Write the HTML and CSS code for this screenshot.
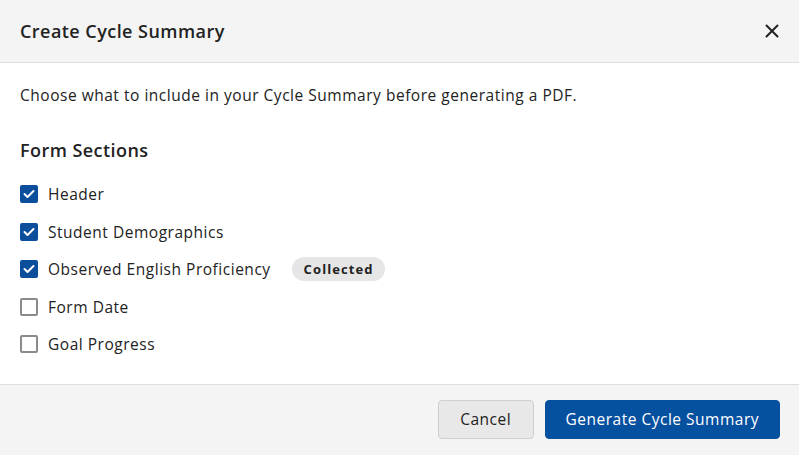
FILE: index.html
```html
<!DOCTYPE html>
<html lang="en">
<head>
<meta charset="utf-8">
<title>Create Cycle Summary</title>
<link rel="stylesheet" href="styles.css">
</head>
<body>
<div class="modal">
  <header class="modal-header">
    <h1 class="modal-title">Create Cycle Summary</h1>
    <button class="close-btn" aria-label="Close">
      <svg width="14" height="14" viewBox="0 0 14 14"><path d="M1.5 1.5 L12.5 12.5 M12.5 1.5 L1.5 12.5" stroke="#222" stroke-width="2" stroke-linecap="round" fill="none"/></svg>
    </button>
  </header>
  <main class="modal-body">
    <p class="intro">Choose what to include in your Cycle Summary before generating a PDF.</p>
    <h2 class="section-title">Form Sections</h2>
    <ul class="options">
      <li class="option"><span class="box checked"><svg width="12" height="10" viewBox="0 0 12 10"><path d="M1.5 5 L4.5 8 L10.5 2" stroke="#fff" stroke-width="2" fill="none" stroke-linecap="round" stroke-linejoin="round"/></svg></span><span class="label">Header</span></li>
      <li class="option"><span class="box checked"><svg width="12" height="10" viewBox="0 0 12 10"><path d="M1.5 5 L4.5 8 L10.5 2" stroke="#fff" stroke-width="2" fill="none" stroke-linecap="round" stroke-linejoin="round"/></svg></span><span class="label">Student Demographics</span></li>
      <li class="option"><span class="box checked"><svg width="12" height="10" viewBox="0 0 12 10"><path d="M1.5 5 L4.5 8 L10.5 2" stroke="#fff" stroke-width="2" fill="none" stroke-linecap="round" stroke-linejoin="round"/></svg></span><span class="label">Observed English Proficiency</span><span class="badge">Collected</span></li>
      <li class="option"><span class="box"></span><span class="label">Form Date</span></li>
      <li class="option"><span class="box"></span><span class="label">Goal Progress</span></li>
    </ul>
  </main>
  <footer class="modal-footer">
    <button class="btn btn-secondary">Cancel</button>
    <button class="btn btn-primary">Generate Cycle Summary</button>
  </footer>
</div>
</body>
</html>
```
FILE: styles.css
```css
* { box-sizing: border-box; }
html, body { margin: 0; padding: 0; }
body {
  font-family: "Open Sans", "Liberation Sans", sans-serif;
  color: #222;
  background: #fff;
  width: 799px;
  height: 455px;
  overflow: hidden;
  letter-spacing: 0.52px;
}
.modal {
  display: flex;
  flex-direction: column;
  height: 455px;
}
.modal-header {
  height: 63px;
  background: #f4f4f4;
  border-bottom: 1px solid #dedede;
  display: flex;
  align-items: center;
  justify-content: space-between;
  padding: 0 20px;
}
.modal-title {
  margin: 0;
  font-size: 18px;
  font-weight: 600;
  letter-spacing: 0.45px;
  color: #222;
}
.close-btn {
  border: 0;
  background: none;
  padding: 0;
  width: 14px;
  height: 14px;
  display: flex;
  cursor: pointer;
}
.modal-body {
  flex: 1;
  padding: 21px 20px 0;
}
.intro {
  margin: 0;
  font-size: 15.5px;
  line-height: 22px;
}
.section-title {
  margin: 33px 0 0;
  font-size: 18px;
  font-weight: 600;
  letter-spacing: 0.45px;
  line-height: 22px;
}
.options {
  list-style: none;
  margin: 21px 0 0;
  padding: 0;
  display: flex;
  flex-direction: column;
  gap: 13.5px;
}
.option {
  display: flex;
  align-items: center;
  height: 24px;
  font-size: 15.5px;
}
.box {
  width: 18px;
  height: 18px;
  border: 2px solid #8a8a8a;
  border-radius: 2px;
  display: flex;
  align-items: center;
  justify-content: center;
  margin-right: 10px;
  flex: none;
}
.box.checked {
  background: #0b4f9c;
  border-color: #0b4f9c;
}
.badge {
  margin-left: 21px;
  height: 24px;
  padding: 0 11px 0 12px;
  border-radius: 12px;
  background: #e6e6e6;
  font-size: 13px;
  font-weight: 700;
  letter-spacing: 1.1px;
  display: flex;
  align-items: center;
  color: #222;
}
.modal-footer {
  height: 71px;
  background: #f4f4f4;
  border-top: 1px solid #dedede;
  display: flex;
  justify-content: flex-end;
  align-items: center;
  gap: 11px;
  padding: 0 19px 2px;
}
.btn {
  height: 39px;
  font-family: inherit;
  font-size: 15.5px;
  letter-spacing: 0.5px;
  border-radius: 4px;
  padding: 0 20px;
  cursor: pointer;
}
.btn-secondary {
  background: #e8e8e8;
  border: 1px solid #cfcfcf;
  color: #222;
  padding: 0 21.5px;
}
.btn-primary {
  background: #0650a0;
  border: 1px solid #0650a0;
  color: #fff;
}
```
